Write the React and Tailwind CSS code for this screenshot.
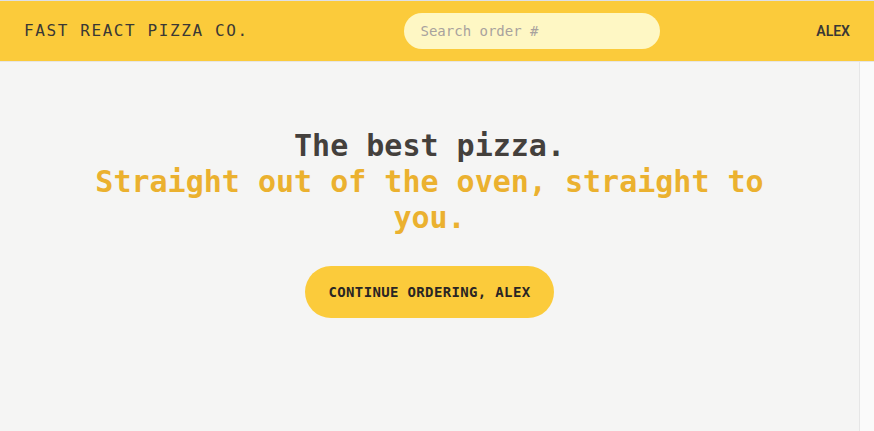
import React from 'react';

const mono = { fontFamily: '"DejaVu Sans Mono", "Liberation Mono", monospace' };

const Header = () => {
  return (
    <header className="flex items-center justify-between border-b border-stone-200 bg-[#fbcb3b] px-6 py-3 uppercase">
      <a href="#" className="tracking-widest text-[#3a3835]">Fast React Pizza Co.</a>
      <form>
        <input
          placeholder="Search order #"
          className="w-64 rounded-full bg-[#fef7c4] px-4 py-2 text-sm placeholder:text-[#a8a29e] focus:outline-none"
          style={mono}
        />
      </form>
      <div className="text-sm font-semibold text-[#3a3835] font-['Roboto',sans-serif]">Alex</div>
    </header>
  );
};

export default function App() {
  return (
    <div className="flex h-[431px] flex-col bg-[#f5f5f4]" style={mono}>
      <div className="h-px bg-[#dde0e7]" />
      <Header />
      <div className="flex flex-1">
        <main className="flex-1">
          <div className="mt-[66px] px-4 text-center">
            <h1 className="mx-auto mb-[30px] max-w-3xl px-4 text-3xl font-semibold text-[#44403c]">
              The best pizza.
              <br />
              <span className="text-[#ebb12f]">Straight out of the oven, straight to you.</span>
            </h1>
            <button className="rounded-full bg-[#fbcb3b] px-6 py-4 text-sm font-semibold uppercase tracking-wide text-[#292524]">
              Continue ordering, Alex
            </button>
          </div>
        </main>
        {/* scrollbar track */}
        <div className="w-[15px] border-l border-[#e6e6e6] bg-[#fafafa]" />
      </div>
    </div>
  );
}
